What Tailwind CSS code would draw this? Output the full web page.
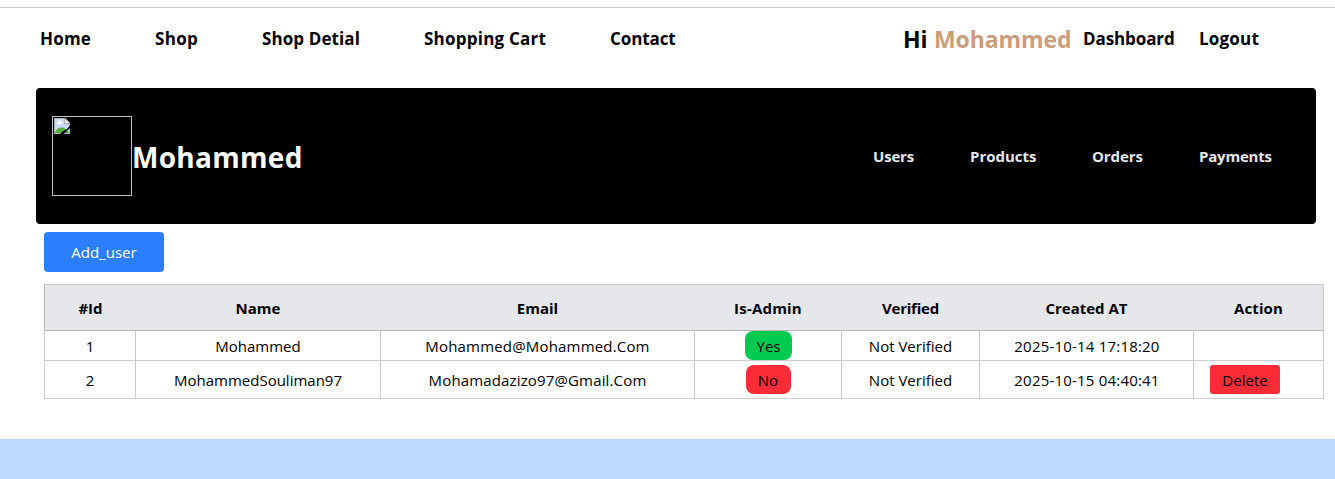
<!DOCTYPE html>
<html lang="en">
<head>
<meta charset="utf-8">
<title>Dashboard</title>
<script src="https://cdn.jsdelivr.net/npm/@tailwindcss/browser@4"></script>
</head>
<body class="h-[479px] overflow-hidden bg-white font-['Open_Sans','Noto_Sans',sans-serif] text-[15px] text-black flex flex-col whitespace-nowrap">
  <header class="mt-[7px] h-[81px] shrink-0 border-t border-[#ccc] pl-10 pb-[18px] flex items-center text-[17px] font-bold">
    <nav class="w-[863px] flex">
      <a class="w-[115px] tracking-[0.2px]">Home</a>
      <a class="w-[107px] tracking-[0.3px]">Shop</a>
      <a class="w-[162px] tracking-[0.1px]">Shop Detial</a>
      <a class="w-[186px] tracking-[0.23px]">Shopping Cart</a>
      <a class="tracking-[-0.1px]">Contact</a>
    </nav>
    <div class="flex items-center">
      <p class="w-[180px] text-[23px] flex"><span class="w-[31px]">Hi</span><span class="text-[#cc9c7c] tracking-[-0.1px]">Mohammed</span></p>
      <a class="w-[116px] tracking-[-0.1px]">Dashboard</a>
      <a class="tracking-[0.2px]">Logout</a>
    </div>
  </header>
  <section class="ml-9 w-[1280px] h-[136px] shrink-0 rounded bg-black pl-4 flex items-center text-white">
    <div class="size-20 border border-[#c0c0c0] p-px">
      <svg width="16" height="16" viewBox="0 0 16 16">
        <path d="M0 0h11l5 5v11H0z" fill="#c7d8f5"/>
        <path d="M.5 16V.5H11" fill="none" stroke="#b0b0b0"/>
        <path d="M3 6.200a1.600 1.600 0 0 1 1-2.500 2 2 0 0 1 3.600 0 1.500 1.500 0 0 1 .4 2.500z" fill="#fff"/>
        <path d="M1 15v-1.500c2-2.500 4-4 6.500-4 3 0 5.500 2 7.500 5.500z" fill="#55ad3c"/>
        <path d="M.5 15.500h15V5" fill="none" stroke="#b0b0b0"/>
        <path d="M10.500 0v5.500H16z" fill="#f5f5f5" stroke="#999" stroke-width=".8"/>
        <path d="M6 16 9 13l3.500-1.500L16 7.500v2.500l-3.500 3.200L9.500 16z" fill="#000"/>
      </svg>
    </div>
    <h1 class="w-[741px] pt-px text-[28px] font-bold tracking-[0.3px]">Mohammed</h1>
    <nav class="flex font-bold text-gray-200">
      <a class="w-[97px] tracking-[-0.2px]">Users</a>
      <a class="w-[122px]">Products</a>
      <a class="w-[107px] tracking-[-0.1px]">Orders</a>
      <a class="tracking-[-0.2px]">Payments</a>
    </nav>
  </section>
  <main class="ml-11 mt-2 w-[1280px]">
    <button class="w-[120px] h-10 rounded bg-[#2b7fff] text-white flex items-center justify-center">Add_user</button>
    <table class="mt-3 w-full table-fixed border-separate border-spacing-0 border-r border-b border-black/20 text-center">
      <colgroup><col class="w-[91px]"><col class="w-[245px]"><col class="w-[314px]"><col class="w-[147px]"><col class="w-[138px]"><col class="w-[214px]"><col></colgroup>
      <thead>
        <tr class="h-[46px] *:border-t *:border-t-[#c6c6c8] *:bg-gray-200 *:p-0 *:pt-px *:pl-px">
          <th class="border-l border-l-[#b7b7b9]">#Id</th><th>Name</th><th>Email</th><th class="tracking-[0.2px]">Is-Admin</th><th class="tracking-[-0.2px]">Verified</th><th>Created AT</th><th class="tracking-[0.1px]">Action</th>
        </tr>
      </thead>
      <tbody>
        <tr class="h-[30px] *:border-t *:border-l *:border-black/20 *:border-t-[#b4b4b6] *:p-0">
          <td class="pt-0.5!">1</td><td class="pt-0.5!">Mohammed</td><td class="pt-0.5! tracking-[0.18px]">Mohammed@Mohammed.Com</td>
          <td><span class="mx-auto flex h-[29px] w-[47px] items-center justify-center rounded-lg bg-[#00c950] pt-0.5 pl-px">Yes</span></td>
          <td class="pt-0.5!">Not Verified</td><td class="pt-0.5! pl-px! tracking-[0.2px]">2025-10-14 17:18:20</td><td></td>
        </tr>
        <tr class="h-[38px] *:border-t *:border-l *:border-black/20 *:p-0">
          <td class="pt-0.5!">2</td><td class="pt-0.5!">MohammedSouliman97</td><td class="pt-0.5! tracking-[0.15px]">Mohamadazizo97@Gmail.Com</td>
          <td><span class="mx-auto flex h-[29px] w-[45px] items-center justify-center rounded-lg bg-[#fb2c36] pt-0.5">No</span></td>
          <td class="pt-0.5!">Not Verified</td><td class="pt-0.5! pl-px! tracking-[0.2px]">2025-10-15 04:40:41</td>
          <td><button class="ml-4 flex h-[29px] w-[70px] items-center justify-center rounded-[3px] bg-[#fb2c36] pt-0.5">Delete</button></td>
        </tr>
      </tbody>
    </table>
  </main>
  <footer class="mt-10 h-10 shrink-0 bg-blue-200"></footer>
</body>
</html>
